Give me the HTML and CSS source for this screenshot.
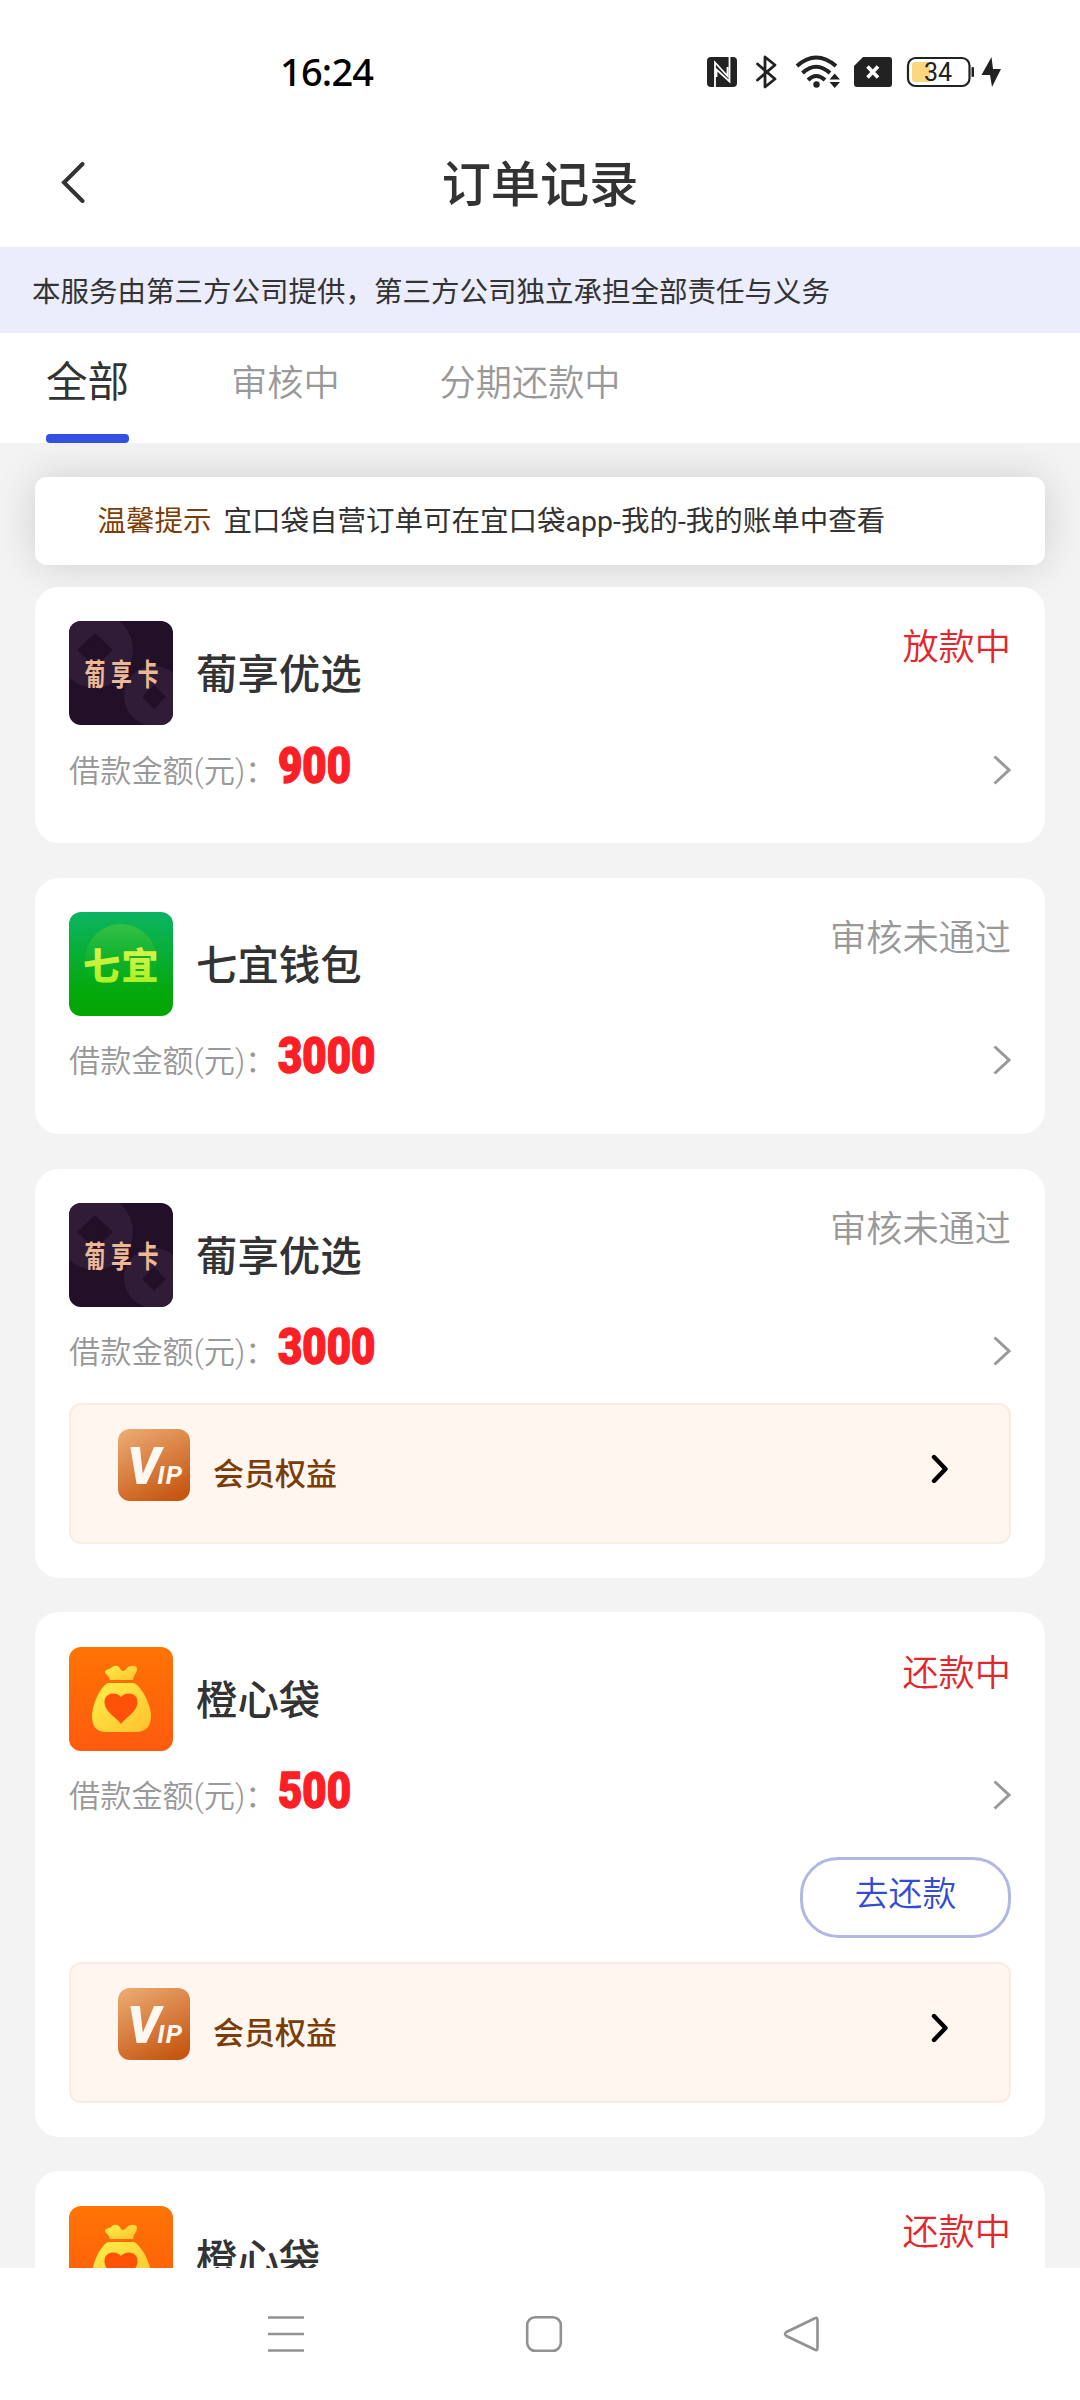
FILE: index.html
```html
<!DOCTYPE html>
<html lang="zh-CN">
<head>
<meta charset="utf-8">
<title>订单记录</title>
<link rel="stylesheet" href="styles.css">
</head>
<body>
<svg class="defs" width="0" height="0" aria-hidden="true">
  <defs>
    <linearGradient id="gGreen" x1="0" y1="0" x2="0" y2="1"><stop offset="0" stop-color="#0cb463"/><stop offset=".75" stop-color="#04a90d"/><stop offset="1" stop-color="#02a502"/></linearGradient>
    <linearGradient id="gBall" x1="0" y1="0" x2="0" y2="1"><stop offset="0" stop-color="#35c144"/><stop offset="1" stop-color="#04a90d" stop-opacity="0"/></linearGradient>
    <linearGradient id="gLime" x1="0" y1="0" x2="0" y2="1"><stop offset="0" stop-color="#e8f25a"/><stop offset="1" stop-color="#a2f01c"/></linearGradient>
    <linearGradient id="gOrange" x1="0" y1="0" x2="0" y2="1"><stop offset="0" stop-color="#ff7404"/><stop offset="1" stop-color="#ff5a0e"/></linearGradient>
    <linearGradient id="gBag" x1="0" y1="0" x2="1" y2="1"><stop offset="0" stop-color="#fff04a"/><stop offset="1" stop-color="#ffc02c"/></linearGradient>
    <linearGradient id="gVip" x1=".2" y1="0" x2=".7" y2="1"><stop offset="0" stop-color="#eaa76f"/><stop offset="1" stop-color="#c65712"/></linearGradient>
  </defs>
  <symbol id="bg-pu" viewBox="0 0 104 104">
    <rect width="104" height="104" fill="#220f28"/>
    <circle cx="26" cy="29" r="38" fill="#301c37"/>
    <path d="M26 14 42 29 26 44 10 29Z" fill="#220f28" stroke="#220f28" stroke-width="3" stroke-linejoin="round"/>
    <circle cx="85" cy="75" r="30" fill="#301c37"/>
    <path d="M85 66 95 76 85 86 75 76Z" fill="#220f28" stroke="#220f28" stroke-width="3" stroke-linejoin="round"/>
  </symbol>
  <symbol id="logo-bag" viewBox="0 0 104 104">
    <rect width="104" height="104" fill="url(#gOrange)"/>
    <path d="M36 25C36 22 40 23 43 20C47 17 51 20 52 23C54 25 56 24 58 21C61 18 68 18 68 22C68 26 65 27 64 33H41C40 28 36 27 36 25Z" fill="url(#gBag)"/>
    <path d="M39 36H65C73 40 82 58 82 69C82 80 76 85 67 85H37C28 85 23 80 23 69C23 58 31 40 39 36Z" fill="url(#gBag)"/>
    <path d="M52 77C48 71 36 65 35.500 56C35 49 40 46.500 44 46.500C48 46.500 50 48 52 50C54 48 56 46.500 60 46.500C65 46.500 69 50 68.500 56C68 65 56 71 52 77Z" fill="#ff5208"/>
  </symbol>
  <symbol id="arrow" viewBox="0 0 18 30"><path d="M1.500 1.500 16 15 1.500 28.500" fill="none" stroke="currentColor" stroke-width="3"/></symbol>
  <symbol id="arrow-bold" viewBox="0 0 18 30"><path d="M3 3 14.500 15 3 27" fill="none" stroke="currentColor" stroke-width="4.400" stroke-linecap="round" stroke-linejoin="round"/></symbol>
</svg>

<div class="phone">
  <div class="statusbar">
    <span class="time">16:24</span>
    <svg class="status-icons" viewBox="700 50 310 44" width="310" height="44">
      <rect x="707" y="57" width="30" height="30" rx="4" fill="#222"/>
      <path d="M715 88V62.500L727.500 76V67M729.500 56V81.500L716.500 69.500V77" fill="none" stroke="#fff" stroke-width="1.800"/>
      <path d="M757.500 64 775 79 765 87V57L775 65 757.500 80" fill="none" stroke="#222" stroke-width="2.800" stroke-linejoin="round" stroke-linecap="round"/>
      <g fill="none" stroke="#222" stroke-width="4"><path d="M797 66Q816 49 836 66"/><path d="M802.500 73Q816 60.500 830 73"/><path d="M808 80Q816 72 825 80"/></g>
      <circle cx="816.500" cy="84.500" r="3.200" fill="#222"/>
      <path d="M829.500 79.500 834.700 73.500 840 79.500ZM829.500 82 834.700 88 840 82Z" fill="#222"/>
      <path d="M863 57H889Q892 57 892 60V84Q892 87 889 87H857Q854 87 854 84V66Z" fill="#222"/>
      <path d="M867.500 66.500 878 77.500M878 66.500 867.500 77.500" stroke="#fff" stroke-width="3.600"/>
      <rect x="908" y="58" width="61.500" height="28" rx="7.500" fill="#fff" stroke="#222" stroke-width="2.200"/>
      <path d="M915 62H930V82H915Q912 82 912 79V65Q912 62 915 62Z" fill="#fdd780"/>
      <rect x="971.500" y="67" width="2.500" height="10" rx="1" fill="#222"/>
      <text class="battery" x="924" y="81">34</text>
      <path d="M991.500 57 981.500 75H990L992 87 1001 69H993Z" fill="#222"/>
    </svg>
  </div>

  <header class="header">
    <svg class="back" viewBox="0 0 26 42" width="26" height="42"><path d="M22.500 2 4 20.500 22.500 39" fill="none" stroke="#333" stroke-width="4" stroke-linecap="round"/></svg>
    <h1 class="title">订单记录</h1>
  </header>

  <div class="notice">本服务由第三方公司提供，第三方公司独立承担全部责任与义务</div>

  <nav class="tabs">
    <a class="tab tab-active">全部</a>
    <a class="tab">审核中</a>
    <a class="tab">分期还款中</a>
  </nav>

  <main class="content">
    <div class="tip"><span class="tip-label">温馨提示</span><span>宜口袋自营订单可在宜口袋app-我的-我的账单中查看</span></div>

    <div class="orders">
      <section class="card">
        <div class="card-head">
          <svg class="logo" viewBox="0 0 104 104"><use href="#bg-pu"/><text class="pu-text" x="15.500" y="45.500" transform="scale(1 1.4)">葡享卡</text></svg>
          <h2 class="name">葡享优选</h2>
          <span class="status status-live">放款中</span>
        </div>
        <div class="amount-row">
          <span class="amount-label">借款金额(元)：</span><span class="amount">900</span>
          <svg class="arrow"><use href="#arrow"/></svg>
        </div>
      </section>

      <section class="card">
        <div class="card-head">
          <svg class="logo" viewBox="0 0 104 104">
            <rect width="104" height="104" fill="url(#gGreen)"/>
            <circle cx="52" cy="48" r="36" fill="url(#gBall)"/>
            <text class="qi-text" x="14" y="68">七宜</text>
          </svg>
          <h2 class="name">七宜钱包</h2>
          <span class="status">审核未通过</span>
        </div>
        <div class="amount-row">
          <span class="amount-label">借款金额(元)：</span><span class="amount">3000</span>
          <svg class="arrow"><use href="#arrow"/></svg>
        </div>
      </section>

      <section class="card">
        <div class="card-head">
          <svg class="logo" viewBox="0 0 104 104"><use href="#bg-pu"/><text class="pu-text" x="15.500" y="45.500" transform="scale(1 1.4)">葡享卡</text></svg>
          <h2 class="name">葡享优选</h2>
          <span class="status">审核未通过</span>
        </div>
        <div class="amount-row">
          <span class="amount-label">借款金额(元)：</span><span class="amount">3000</span>
          <svg class="arrow"><use href="#arrow"/></svg>
        </div>
        <div class="vip">
          <svg class="vip-icon" viewBox="0 0 72 72"><rect width="72" height="72" rx="12" fill="url(#gVip)"/><text class="vip-v" x="9" y="55">V<tspan class="vip-ip" dx="-3">IP</tspan></text></svg>
          <span class="vip-label">会员权益</span>
          <svg class="vip-arrow"><use href="#arrow-bold"/></svg>
        </div>
      </section>

      <section class="card">
        <div class="card-head">
          <svg class="logo"><use href="#logo-bag"/></svg>
          <h2 class="name">橙心袋</h2>
          <span class="status status-live">还款中</span>
        </div>
        <div class="amount-row">
          <span class="amount-label">借款金额(元)：</span><span class="amount">500</span>
          <svg class="arrow"><use href="#arrow"/></svg>
        </div>
        <div class="actions"><button class="repay">去还款</button></div>
        <div class="vip">
          <svg class="vip-icon" viewBox="0 0 72 72"><rect width="72" height="72" rx="12" fill="url(#gVip)"/><text class="vip-v" x="9" y="55">V<tspan class="vip-ip" dx="-3">IP</tspan></text></svg>
          <span class="vip-label">会员权益</span>
          <svg class="vip-arrow"><use href="#arrow-bold"/></svg>
        </div>
      </section>

      <section class="card">
        <div class="card-head">
          <svg class="logo"><use href="#logo-bag"/></svg>
          <h2 class="name">橙心袋</h2>
          <span class="status status-live">还款中</span>
        </div>
      </section>
    </div>
  </main>

  <footer class="sysnav">
    <svg viewBox="0 0 38 38" width="38" height="38"><path d="M1 2.500H37M1 19H37M1 35.500H37"/></svg>
    <svg viewBox="0 0 38 38" width="38" height="38"><rect x="2.200" y="2.200" width="33.600" height="33.600" rx="8"/></svg>
    <svg viewBox="0 0 38 38" width="38" height="38"><path d="M31.500 3.500Q34.500 1.500 34.500 5V33Q34.500 36.500 31.500 34.500L3.500 21Q.5 19 3.500 17Z"/></svg>
  </footer>
</div>
</body>
</html>
```
FILE: styles.css
```css
* { box-sizing: border-box; }
body {
  margin: 0;
  font-family: Roboto, "Noto Sans CJK SC", sans-serif;
  font-weight: 400;
  color: #333;
}
h1, h2 { margin: 0; font-weight: 500; }
svg { display: block; flex: none; }
.defs { position: absolute; }

.phone {
  width: 1080px;
  height: 2400px;
  display: flex;
  flex-direction: column;
  overflow: hidden;
  background: #fff;
}

.statusbar {
  flex: none;
  height: 119px;
  padding: 50px 70px 0 280px;
  display: flex;
  justify-content: space-between;
  align-items: flex-start;
}
.time {
  font: 500 38px/42px "Noto Sans", sans-serif;
  letter-spacing: -0.8px;
  color: #000;
}
.battery { font: 400 25px Roboto, sans-serif; fill: #222; }

.header {
  flex: none;
  height: 128px;
  padding: 0 60px;
  display: grid;
  grid-template-columns: 26px 1fr 26px;
  align-items: center;
}
.title { font-size: 49.2px; line-height: 60px; padding-top: 4px; text-align: center; }

.notice {
  flex: none;
  height: 86px;
  padding-left: 32px;
  font-size: 28.5px;
  line-height: 91px;
  background: #ebedfd;
}

.tabs {
  flex: none;
  height: 110px;
  padding-left: 46px;
  display: flex;
  background: #fff;
}
.tab {
  font-size: 36.2px;
  font-weight: 350;
  line-height: 102px;
  color: #999;
  margin-right: 100px;
}
.tab-active {
  display: flex;
  flex-direction: column;
  justify-content: space-between;
  font-size: 41.500px;
  font-weight: 400;
  line-height: 99px;
  color: #333;
  margin-right: 102px;
}
.tab-active::after {
  content: "";
  height: 9px;
  border-radius: 4px;
  background: #3350e2;
}

.content {
  flex: 1;
  min-height: 0;
  overflow: hidden;
  padding: 34px 35px 0;
  background: #f3f3f3;
}
.tip {
  height: 88px;
  padding-left: 62.500px;
  display: flex;
  gap: 12px;
  font-size: 28.5px;
  line-height: 90px;
  background: #fff;
  border-radius: 12px;
  box-shadow: 0 0 42px rgba(0, 0, 0, .15);
}
.tip-label { color: #7c3e06; }

.orders {
  position: relative;
  display: flex;
  flex-direction: column;
  gap: 34.300px;
  margin-top: 21.800px;
}
.card {
  flex: none;
  padding: 34.300px 34px;
  background: #fff;
  border-radius: 24px;
}
.card-head { display: flex; height: 104px; }
.logo { width: 104px; height: 104px; border-radius: 12px; }
.pu-text { font: 700 21px "Noto Sans CJK SC", sans-serif; letter-spacing: 5.500px; fill: #ecb896; }
.qi-text { font: 900 37px "Noto Sans CJK SC", sans-serif; letter-spacing: 1.500px; fill: url(#gLime); }
.name {
  margin-left: 23px;
  font-size: 41.4px;
  line-height: 108px;
}
.status {
  margin-left: auto;
  font-size: 36.2px;
  font-weight: 350;
  line-height: 54px;
  color: #999;
}
.status-live { color: #e3262b; }

.amount-row {
  display: flex;
  align-items: center;
  height: 84px;
}
.amount-label { font-size: 31.2px; font-weight: 350; line-height: 84px; color: #999; padding-top: 9px; }
.amount {
  font: 900 50px/60px Roboto, sans-serif;
  color: #fc2026;
  -webkit-text-stroke: 1.500px #fc2026;
  transform: scaleX(.84);
  transform-origin: left;
  margin-left: 2px;
  padding-bottom: 3px;
}
.arrow { width: 18px; height: 30px; margin: 5px 0 0 auto; color: #999; }

.actions { display: flex; justify-content: flex-end; padding: 22.700px 0 11.500px; }
.repay {
  width: 211px;
  height: 81px;
  padding: 0 0 12px;
  font: inherit;
  font-size: 33.800px;
  font-weight: 350;
  color: #344bd2;
  background: #fff;
  border: 3px solid #b2b8e6;
  border-radius: 38px;
}

.vip {
  display: flex;
  height: 141px;
  margin-top: 11.900px;
  padding: 24px 60px 0 47px;
  background: #fff6f0;
  border: 2px solid #faece2;
  border-radius: 12px;
}
.vip-icon { width: 72px; height: 72px; }
.vip-v { font: italic 900 52px Roboto, sans-serif; fill: #fff8f0; }
.vip-ip { font-size: 26px; font-weight: 700; letter-spacing: 1px; }
.vip-label {
  margin-left: 23px;
  font-size: 31px;
  font-weight: 500;
  line-height: 91px;
  color: #7b3d07;
}
.vip-arrow { width: 18px; height: 30px; margin: 25px 0 0 auto; color: #000; }

.sysnav {
  flex: none;
  height: 132px;
  padding: 0 259px 0 267px;
  display: flex;
  justify-content: space-between;
  align-items: center;
  background: #fff;
}
.sysnav svg { fill: none; stroke: #929292; stroke-width: 2.600; }
```
